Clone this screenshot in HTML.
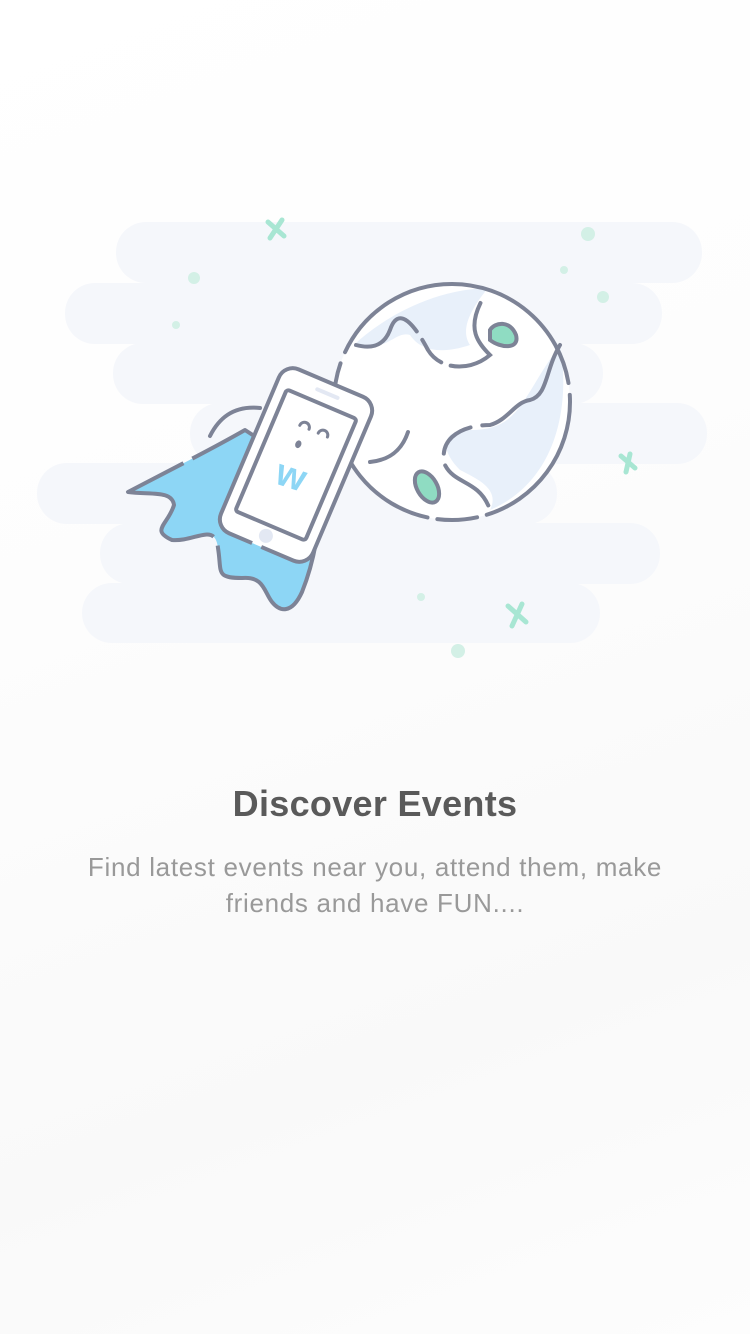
<!DOCTYPE html>
<html><head><meta charset="utf-8"><style>
html,body{margin:0;padding:0}
body{width:750px;height:1334px;overflow:hidden;background:linear-gradient(160deg,#ffffff 0%,#fdfdfd 40%,#f9f9f9 75%,#fdfdfd 100%);font-family:"Liberation Sans",sans-serif;position:relative}
svg{position:absolute;left:0;top:0}
.t{position:absolute;left:0;width:750px;text-align:center}
</style></head><body>
<svg width="750" height="700" viewBox="0 0 750 700">
<g fill="#f5f7fb">
<rect x="116" y="222" width="586" height="61" rx="30"/>
<rect x="65" y="283" width="597" height="61" rx="30"/>
<rect x="113" y="343" width="490" height="61" rx="30"/>
<rect x="190" y="403" width="517" height="61" rx="30"/>
<rect x="37" y="463" width="520" height="61" rx="30"/>
<rect x="100" y="523" width="560" height="61" rx="30"/>
<rect x="82" y="583" width="518" height="60" rx="30"/>
</g>
<g fill="#d3f0e6">
<circle cx="194" cy="278" r="6"/><circle cx="176" cy="325" r="4"/><circle cx="588" cy="234" r="7"/><circle cx="564" cy="270" r="4"/><circle cx="603" cy="297" r="6"/><circle cx="421" cy="597" r="4"/><circle cx="458" cy="651" r="7"/>
</g>
<g stroke="#a8e6d3" stroke-width="5" stroke-linecap="round">
<path d="M268 222l16 14M282 220l-12 18"/><path d="M621 456l14 12M630 454l-4 18"/><path d="M508 606l18 16M522 604l-10 22"/>
</g>
<circle cx="452" cy="402" r="118" fill="#fff"/>
<path d="M356 343 C370 330 420 290 488 288 C470 310 460 330 470 345 C440 355 420 350 410 335 C395 330 385 355 356 343Z" fill="#e8f0fa"/>
<path d="M560 345 C570 400 560 480 490 510 C500 490 480 480 460 470 C440 450 440 430 470 430 C520 430 520 400 560 345Z" fill="#e8f0fa"/>
<g fill="none" stroke="#7d8396" stroke-width="4" stroke-linecap="round">
<circle cx="452" cy="402" r="118" stroke-dasharray="150 10 40 10 200 12 300 12"/>
<path d="M356 345 C375 350 385 343 390 330 C400 300 420 335 428 350 C440 370 470 372 490 355 C475 340 465 325 488 290" stroke-dasharray="80 10 30 10 100"/>
<path d="M560 345 C545 370 548 395 530 400 C515 402 508 420 490 425 C460 425 438 440 445 465 C455 485 480 480 490 510" stroke-dasharray="120 12 40 12 60"/>
<path d="M408 432 C402 450 390 460 370 462"/>
</g>
<path d="M490 330 C495 322 510 320 516 335 C520 350 500 348 490 340Z" fill="#8fdcc2" stroke="#7d8396" stroke-width="4"/>
<ellipse cx="427" cy="487" rx="10" ry="17" transform="rotate(-30 427 487)" fill="#8fdcc2" stroke="#7d8396" stroke-width="4"/>
<path d="M245 430 C210 450 170 470 128 492 C150 495 172 490 174 505 C168 525 150 530 172 540 C195 542 215 522 218 548 C222 572 215 578 242 578 C264 576 264 592 272 602 C280 612 292 614 302 592 C314 562 320 530 322 480Z" fill="#8dd6f5" stroke="#7d8396" stroke-width="4" stroke-linejoin="round" stroke-dasharray="60 10 200 10 400"/>
<path d="M210 436 C218 420 232 405 260 408" fill="none" stroke="#7d8396" stroke-width="4" stroke-linecap="round"/>
<g transform="translate(296 465) rotate(23)">
<rect x="-50" y="-89" width="100" height="178" rx="15" fill="#fff" stroke="#7d8396" stroke-width="4" stroke-dasharray="300 10 500"/>
<rect x="-38" y="-66" width="76" height="132" rx="3" fill="#fff" stroke="#7d8396" stroke-width="4"/>
<line x1="-10" y1="-78" x2="12" y2="-78" stroke="#e3e8f3" stroke-width="4" stroke-linecap="round"/>
<circle cx="0" cy="77" r="7" fill="#e3e8f3"/>
<g fill="none" stroke="#7d8396" stroke-width="3" stroke-linecap="round">
<path d="M-12 -38 a5 5 0 0 1 10 0"/><path d="M8 -38 a5 5 0 0 1 10 0"/>
</g>
<ellipse cx="-6" cy="-20" rx="3" ry="4" fill="#7d8396"/>
<text x="-16" y="24" font-family="Liberation Sans" font-weight="bold" font-size="38" fill="#8dd6f5" transform="rotate(-5)">w</text>
</g>
</svg>
<div class="t" style="top:783px;font-size:36px;font-weight:bold;color:#5a5a5a;letter-spacing:0.3px">Discover Events</div>
<div class="t" style="top:849px;font-size:26px;line-height:36px;color:#999;letter-spacing:0.7px">Find latest events near you, attend them, make<br>friends and have FUN....</div>
</body></html>
